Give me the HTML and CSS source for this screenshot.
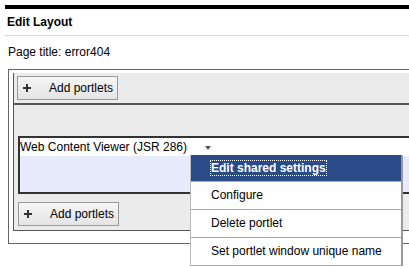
FILE: index.html
```html
<!doctype html>
<html>
	<head>
		<link rel="stylesheet" href="styles.css">
	</head>
	<body>
		<div class="page">
			<div class="heading">Edit Layout</div>
			<div class="pagetitle">Page title: error404</div>
			<div class="outer">
				<div class="inner">
					<div class="toolbar top">
						<button class="addbtn"><span class="plus"></span>Add portlets</button>
					</div>
					<div class="column">
						<div class="portlet">
							<div class="portlethead">Web Content Viewer (JSR 286)<span class="arrow"></span></div>
							<div class="portletbody"></div>
							<ul class="menu">
								<li class="selected"><span class="focus">Edit shared settings</span></li>
								<li>Configure</li>
								<li>Delete portlet</li>
								<li>Set portlet window unique name</li>
							</ul>
						</div>
						<div class="toolbar bottom">
							<button class="addbtn"><span class="plus"></span>Add portlets</button>
						</div>
					</div>
				</div>
			</div>
		</div>
	</body>
</html>
```

FILE: styles.css
```css
html, body
{
	margin: 0;
	min-height: 100%;
}

body
{
	font-family: "Liberation Sans", Arial, sans-serif;
	font-size: 12px;
	color: #000000;
	overflow: hidden;
}

.page
{
	margin: 5px 0 0 5px;
	padding-bottom: 30px;
	border-top: 4px solid #000000;
	overflow: hidden;
}

.heading
{
	font-weight: bold;
	line-height: 15px;
	padding: 6px 0 5px 2px;
	border-bottom: 1px solid #dddddd;
}

.pagetitle
{
	line-height: 15px;
	padding: 9px 0 0 3px;
	margin-bottom: 9px;
}

.outer
{
	margin-left: 3px;
	margin-right: -40px;
	border: 1px solid #666666;
	padding: 3px 0 12px 4px;
}

.inner
{
	background-color: #ebebeb;
	border-left: 1px solid #555555;
	border-bottom: 1px solid #555555;
}

.toolbar.top
{
	padding: 3px 0 3px 3px;
	border-bottom: 2px solid #555555;
}

.column
{
	padding: 31px 0 4px 4px;
}

.addbtn
{
	display: flex;
	align-items: center;
	height: 24px;
	margin: 0;
	padding: 0 4px 0 5px;
	border: 1px solid #999999;
	background: linear-gradient(#f6f6f6, #e4e4e4);
	font-family: "Liberation Sans", Arial, sans-serif;
	font-size: 12px;
	color: #000000;
}

.plus
{
	position: relative;
	width: 8px;
	height: 8px;
	margin-right: 18px;
}

.plus::before,
.plus::after
{
	content: "";
	position: absolute;
	background-color: #333333;
}

.plus::before
{
	left: 0;
	top: 3px;
	width: 8px;
	height: 2px;
}

.plus::after
{
	left: 3px;
	top: 0;
	width: 2px;
	height: 8px;
}

.portlet
{
	position: relative;
	border: 2px solid #333333;
}

.portlethead
{
	height: 18px;
	line-height: 18px;
	background-color: #ffffff;
	white-space: nowrap;
}

.arrow
{
	display: inline-block;
	margin-left: 18px;
	vertical-align: 1px;
	border-left: 3px solid transparent;
	border-right: 3px solid transparent;
	border-top: 4px solid #555555;
}

.portletbody
{
	height: 36px;
	background-color: #e8ebfc;
}

.toolbar.bottom
{
	padding-top: 8px;
}

.menu
{
	position: absolute;
	left: 170px;
	top: 17px;
	width: 210px;
	margin: 0;
	padding: 0;
	list-style: none;
	background-color: #ffffff;
	border-left: 1px solid #bbbbbb;
	border-right: 2px solid #999999;
	border-bottom: 1px solid #aaaaaa;
}

.menu li
{
	height: 27px;
	line-height: 27px;
	padding-left: 20px;
	border-top: 1px solid #aaaaaa;
	white-space: nowrap;
}

.menu li.selected
{
	height: 26px;
	line-height: 26px;
	border-top: none;
	background-color: #2b4a88;
	color: #ffffff;
	font-weight: bold;
}

.focus
{
	margin-left: -1px;
	border: 1px dotted #ffffff;
}
```
